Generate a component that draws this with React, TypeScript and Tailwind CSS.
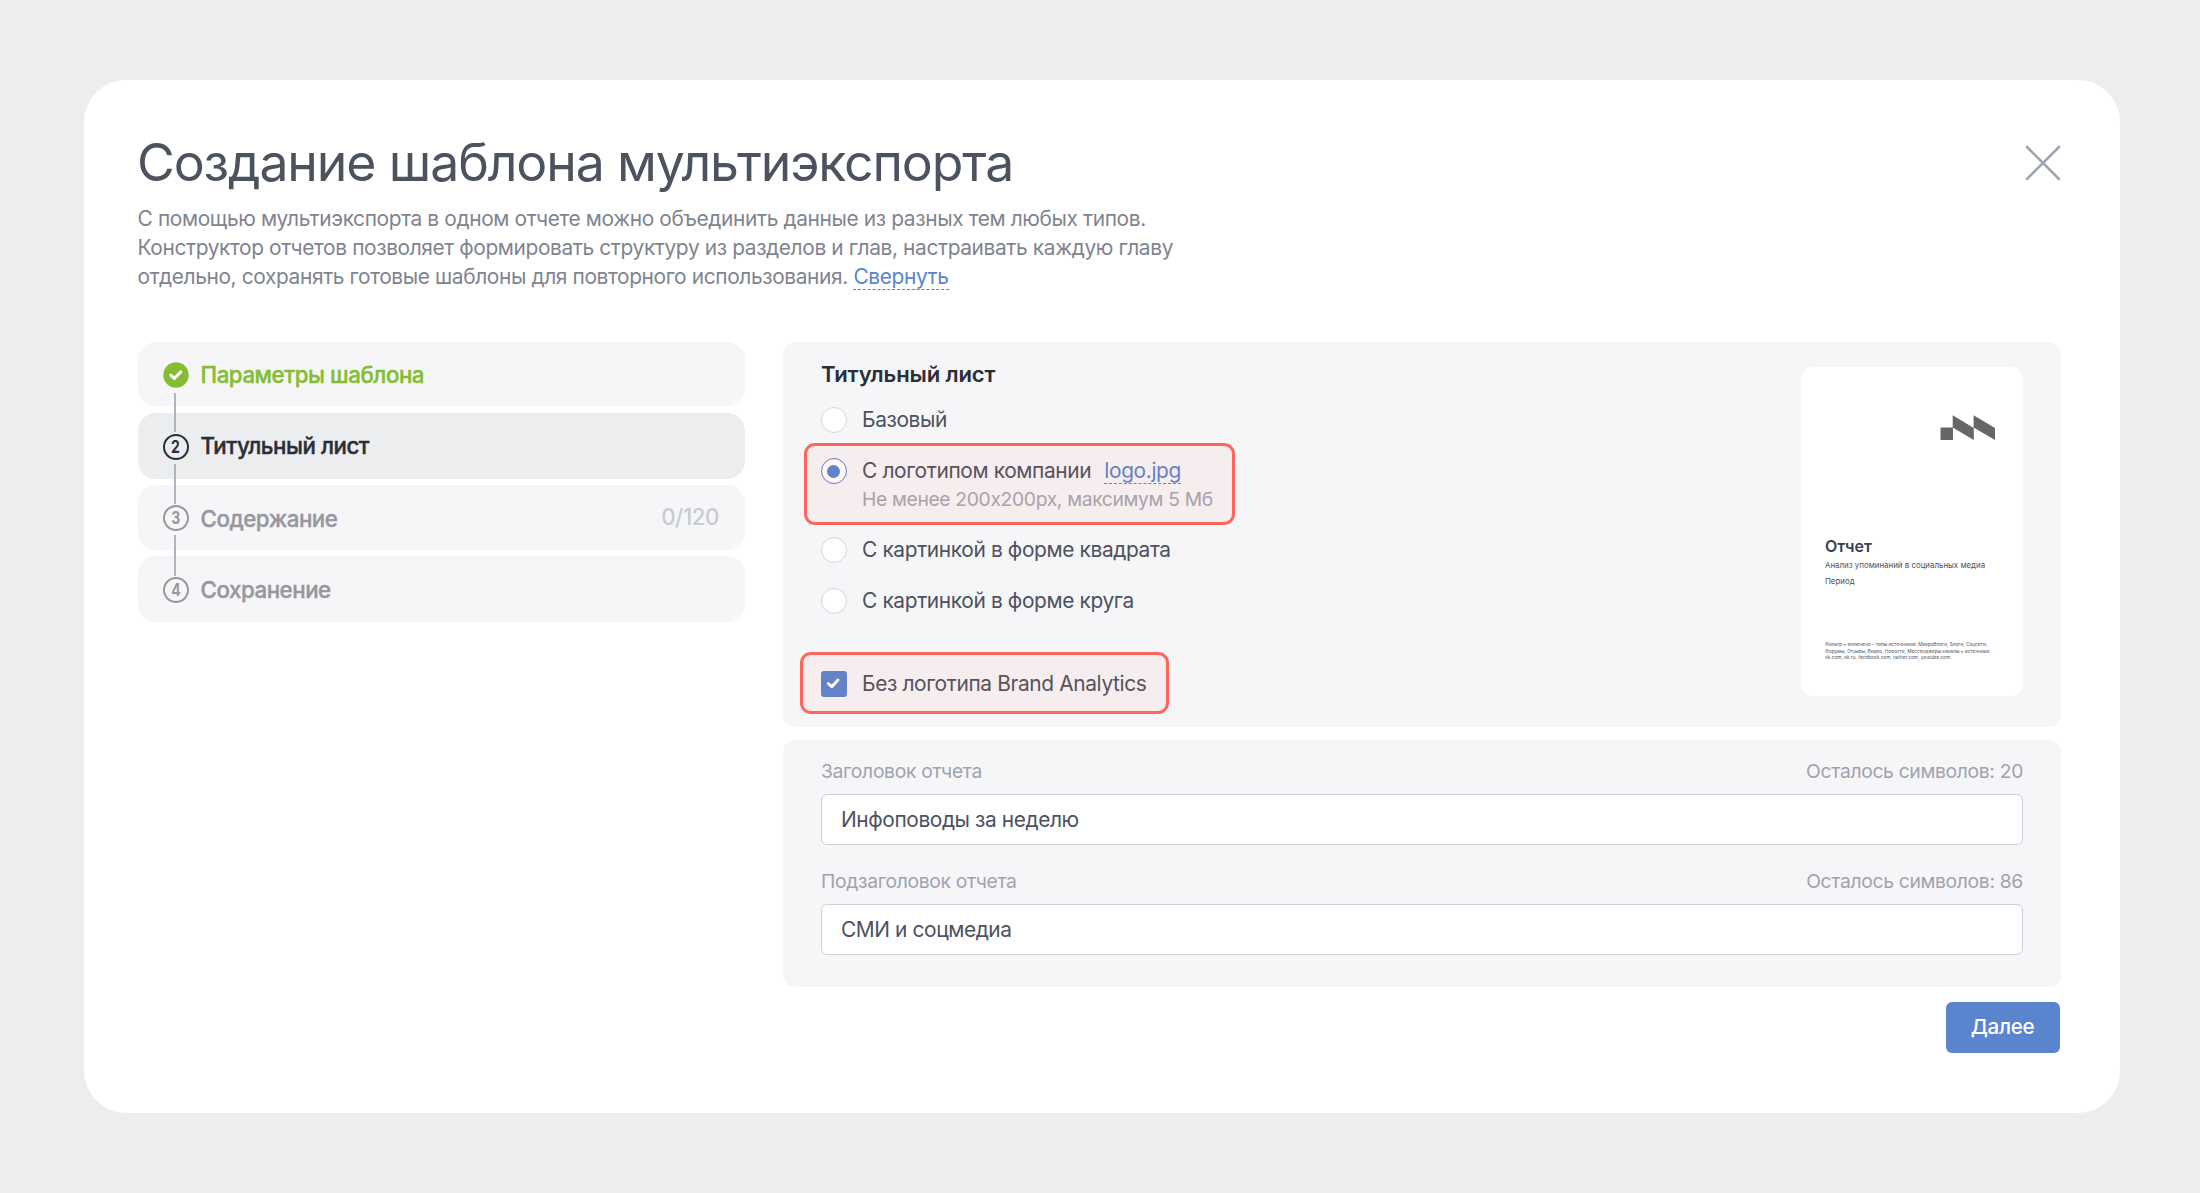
import type { ReactNode } from "react";

function StepBadge({ n, color }: { n: number; color: string }) {
  if (n === 1) {
    return (
      <svg viewBox="0 0 26 26" className="size-[26px] shrink-0">
        <circle cx="13" cy="13" r="12.7" fill="#84bd33" />
        <path d="M7.8 13.2 11.3 16.5 17.8 9.9" fill="none" stroke="#fff" strokeWidth="3" strokeLinecap="round" strokeLinejoin="round" />
      </svg>
    );
  }
  return (
    <span className={`flex size-[26px] shrink-0 items-center justify-center rounded-full border-2 border-current text-[17.5px] leading-none font-bold ${color}`}>
      <span className="scale-x-[0.8]">{n}</span>
    </span>
  );
}

const steps = [
  { n: 1, label: "Параметры шаблона", box: "h-[64px] bg-[#f6f6f8] pt-[2px]", text: "text-[#84bd33]", row: "", count: "" },
  { n: 2, label: "Титульный лист", box: "mt-[7px] h-[66px] bg-[#ecedef] pt-px", text: "text-[#2a2e37]", row: "", count: "" },
  { n: 3, label: "Содержание", box: "mt-1.5 h-[65px] bg-[#f6f6f8] pt-px", text: "text-[#96989d]", row: "pt-[2px]", count: "0/120" },
  { n: 4, label: "Сохранение", box: "mt-1.5 h-[66px] bg-[#f6f6f8] pt-[2px]", text: "text-[#96989d]", row: "", count: "" },
];

function Steps() {
  return (
    <nav className="relative w-[607px] shrink-0">
      {steps.map((s) => (
        <div key={s.n} className={`flex items-center rounded-[18px] pr-[26px] pl-[25px] ${s.box}`}>
          <StepBadge n={s.n} color={s.text} />
          <span className={`ml-[11.5px] text-[22.3px] leading-none font-medium tracking-[-0.46px] [-webkit-text-stroke:0.4px] ${s.row} ${s.text}`}>{s.label}</span>
          {s.count && <span className="ml-auto pb-0.5 text-[22.3px] leading-none font-medium tracking-[-0.43px] text-[#c8cbd2]">{s.count}</span>}
        </div>
      ))}
      <span className="absolute top-[51px] left-[36px] h-[39px] w-0.5 bg-[#b0b4be]" />
      <span className="absolute top-[122px] left-[36px] h-[40px] w-0.5 bg-[#b0b4be]" />
      <span className="absolute top-[193px] left-[36px] h-[41px] w-0.5 bg-[#b0b4be]" />
    </nav>
  );
}

function Radio({ checked, children }: { checked?: boolean; children: ReactNode }) {
  return (
    <label className="flex h-[26px] items-center">
      <span className={`flex size-[26px] items-center justify-center rounded-full border bg-white ${checked ? "border-[#5b7fcb]" : "border-[#d3d6df]"}`}>
        {checked && <span className="mr-px size-[13px] rounded-full bg-[#5b84cf]" />}
      </span>
      <span className="ml-[15px] text-[20.9px] tracking-[-0.37px] whitespace-nowrap text-[#4c525e]">{children}</span>
    </label>
  );
}

function Field({ label, left, value }: { label: string; left: number; value: string }) {
  return (
    <div>
      <div className="flex justify-between text-[19.3px] leading-[27px] tracking-[-0.32px] text-[#9fa3ae]">
        <span>{label}</span>
        <span>Осталось символов: {left}</span>
      </div>
      <div className="mt-[9px] flex h-[51px] items-center rounded-[6px] border border-[#ccd0d9] bg-white pl-[19px] text-[20.9px] tracking-[-0.41px] text-[#4c525e]">{value}</div>
    </div>
  );
}

function Preview() {
  return (
    <div className="h-[329px] w-[222px] shrink-0 rounded-[12px] bg-white pt-12 pl-6 text-[#4c525e]">
      <svg viewBox="0 0 56 26" className="ml-[115px] h-[26px] w-[56px]" fill="#666">
        <path d="M0.5 12.5H13V25H0.5ZM12.7 0.3 33.8 13V25L12.7 12.6ZM33.6 0.3 55 13V25L33.6 12.6Z" />
      </svg>
      <div className="mt-[95px] text-[16px] leading-[20px] font-semibold text-[#3a3f4b]">Отчет</div>
      <div className="mt-[4px] text-[7.9px] leading-[10px] whitespace-nowrap">Анализ упоминаний в социальных медиа</div>
      <div className="mt-[6px] text-[7.9px] leading-[10px]">Период</div>
      <div className="mt-[55px] text-[4.75px] leading-[6.5px] whitespace-nowrap">
        <div>Фильтр • включено – типы источников: Микроблоги, Блоги, Соцсети,</div>
        <div>Форумы, Отзывы, Видео, Новости, Мессенджеры каналы • источники:</div>
        <div>vk.com, ok.ru, facebook.com, twitter.com, youtube.com</div>
      </div>
    </div>
  );
}

export default function App() {
  return (
    <div className="h-[1193px] w-[2200px] bg-[#ecedef] pt-20 pl-[84px] font-['Inter',sans-serif]">
      <main className="h-[1033px] w-[2036px] rounded-[42px] bg-white pt-[49px] pr-[59px] pl-[54px]">
        <header className="flex h-[213px] justify-between">
          <div>
            <h1 className="-ml-px text-[51.75px] leading-[66px] tracking-[-1.12px] text-[#4c525e]">Создание шаблона мультиэкспорта</h1>
            <p className="-ml-[0.5px] mt-[10px] text-[20.9px] leading-[28.75px] tracking-[-0.378px] text-[#7f848f]">
              С помощью мультиэкспорта в одном отчете можно объединить данные из разных тем любых типов.
              <br />
              Конструктор отчетов позволяет формировать структуру из разделов и глав, настраивать каждую главу
              <br />
              отдельно, сохранять готовые шаблоны для повторного использования.{" "}
              <a className="border-b border-dashed border-[#5b84cf] text-[#5b84cf]">Свернуть</a>
            </p>
          </div>
          <svg viewBox="0 0 36 36" className="mt-[16px] size-9" stroke="#9fa4b1" strokeWidth="2.6" strokeLinecap="round">
            <path d="M2 2 34 34M34 2 2 34" />
          </svg>
        </header>

        <div className="flex justify-between">
          <Steps />
          <div className="w-[1278px]">
            <section className="relative flex h-[385px] justify-between rounded-[12px] bg-[#f6f6f8] pr-[38px] pl-[38px]">
              <div className="pt-[18px]">
                <h2 className="text-[22.1px] leading-[29px] font-semibold tracking-[-0.15px] text-[#2a2e37]">Титульный лист</h2>
                <div className="mt-[18px]">
                  <Radio>Базовый</Radio>
                </div>
                <div className="mt-[25px]">
                  <Radio checked>
                    С логотипом компании
                    <a className="ml-[13px] border-b border-dashed border-[#5b84cf] text-[#5b84cf]">logo.jpg</a>
                  </Radio>
                  <div className="mt-px ml-[41px] text-[19.3px] leading-[28px] tracking-[-0.34px] text-[#a3a6b1]">Не менее 200x200px, максимум 5 Мб</div>
                </div>
                <div className="mt-[24px]">
                  <Radio>С картинкой в форме квадрата</Radio>
                </div>
                <div className="mt-[25px]">
                  <Radio>С картинкой в форме круга</Radio>
                </div>
                <label className="mt-[57px] flex h-[26px] items-center">
                  <span className="flex size-[26px] items-center justify-center rounded-[3px] bg-[#5b84cf]">
                    <svg viewBox="0 0 26 26" className="size-[26px]" fill="none" stroke="#fff" strokeWidth="3" strokeLinecap="round" strokeLinejoin="round">
                      <path d="M7.4 12.6 10.8 15.6 17 9" />
                    </svg>
                  </span>
                  <span className="ml-[15px] text-[20.9px] tracking-[-0.37px] text-[#4c525e]">Без логотипа Brand Analytics</span>
                </label>
              </div>
              <div className="pt-[25px]">
                <Preview />
              </div>
              <div className="absolute top-[101px] left-[21px] h-[82px] w-[431px] rounded-[11px] border-[3px] border-[#ff655b] bg-[#ff655b]/6" />
              <div className="absolute top-[310px] left-[17px] h-[62px] w-[369px] rounded-[11px] border-[3px] border-[#ff655b] bg-[#ff655b]/6" />
            </section>

            <section className="mt-[13px] flex h-[247px] flex-col gap-[23px] rounded-[12px] bg-[#f6f6f8] px-[38px] pt-[18px]">
              <Field label="Заголовок отчета" left={20} value="Инфоповоды за неделю" />
              <Field label="Подзаголовок отчета" left={86} value="СМИ и соцмедиа" />
            </section>

            <div className="mt-[15px] mr-px flex justify-end">
              <button className="h-[51px] w-[114px] rounded-[6px] bg-[#5b84cf] pr-px text-[20.6px] font-medium tracking-[-0.3px] text-white">Далее</button>
            </div>
          </div>
        </div>
      </main>
    </div>
  );
}
